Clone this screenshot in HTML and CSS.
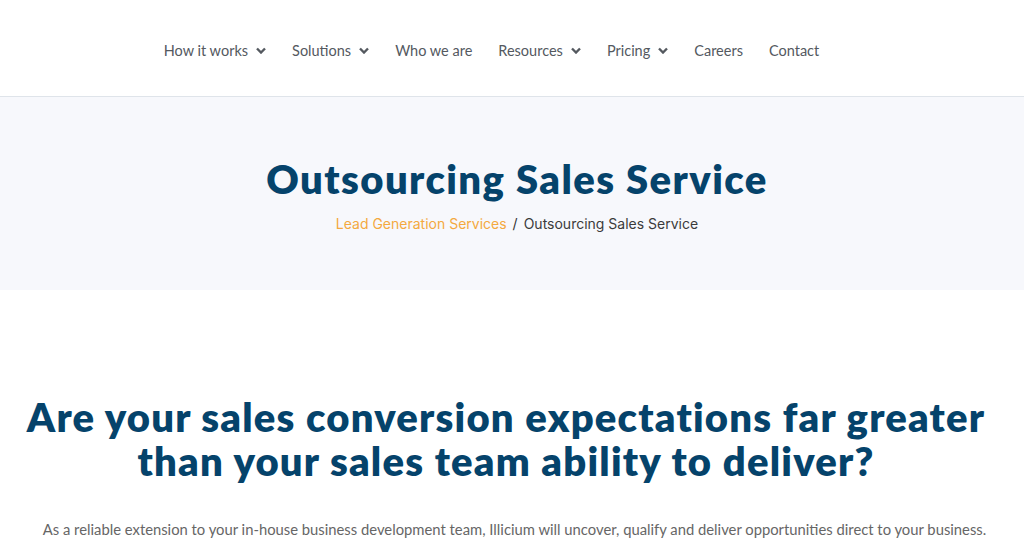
FILE: index.html
```html
<!DOCTYPE html>
<html lang="en">
<head>
<meta charset="utf-8">
<title>Outsourcing Sales Service</title>
<link rel="stylesheet" href="styles.css">
</head>
<body>
<header class="site-header">
  <nav class="main-nav">
    <a class="nav-item" href="#">How it works <svg class="caret" viewBox="0 0 10 6"><path d="M1 1l4 4 4-4"/></svg></a>
    <a class="nav-item" href="#">Solutions <svg class="caret" viewBox="0 0 10 6"><path d="M1 1l4 4 4-4"/></svg></a>
    <a class="nav-item" href="#">Who we are</a>
    <a class="nav-item" href="#">Resources <svg class="caret" viewBox="0 0 10 6"><path d="M1 1l4 4 4-4"/></svg></a>
    <a class="nav-item" href="#">Pricing <svg class="caret" viewBox="0 0 10 6"><path d="M1 1l4 4 4-4"/></svg></a>
    <a class="nav-item" href="#">Careers</a>
    <a class="nav-item" href="#">Contact</a>
  </nav>
</header>
<section class="hero">
  <h1 class="hero-title">Outsourcing Sales Service</h1>
  <div class="breadcrumb"><a href="#" class="crumb-link">Lead Generation Services</a><span class="crumb-sep">/</span><span class="crumb-current">Outsourcing Sales Service</span></div>
</section>
<main class="content">
  <h2 class="lead-heading">Are your sales conversion expectations far greater than your sales team ability to deliver?</h2>
  <p class="lead-text">As a reliable extension to your in-house business development team, Illicium will uncover, qualify and deliver opportunities direct to your business.</p>
</main>
</body>
</html>
```
FILE: styles.css
```css
* { box-sizing: border-box; }
html, body { margin: 0; padding: 0; background: #fff; }
body { font-family: "Lato", "Open Sans", sans-serif; overflow: hidden; }
a { text-decoration: none; }

.site-header {
  height: 97px;
  border-bottom: 1px solid #dfe4ea;
  display: flex;
  justify-content: center;
  align-items: center;
}
.main-nav { display: flex; gap: 26px; padding-top: 5px; margin-left: -41px; }
.nav-item {
  color: #54595f;
  font-size: 14.5px;
  display: flex;
  align-items: center;
  gap: 8px;
}
.caret { width: 10px; height: 7px; fill: none; stroke: #54595f; stroke-width: 2.4; }

.hero {
  background: #f7f8fc;
  height: 193px;
  display: flex;
  flex-direction: column;
  align-items: center;
  padding: 58px 0 0 10px;
}
.hero-title {
  margin: 0;
  color: #05436b;
  font-size: 40px;
  font-weight: 800;
  line-height: 48px;
  letter-spacing: 1.4px;
}
.breadcrumb { margin-top: 12px; font-size: 14px; font-family: "Inter", sans-serif; }
.crumb-link { color: #f4a93f; }
.crumb-sep { color: #333; margin: 0 6px; }
.crumb-current { color: #3b3b3b; }

.content { padding: 105px 10px 0; text-align: center; }
.lead-heading {
  margin: 0;
  padding-right: 12px;
  color: #05436b;
  font-size: 40px;
  font-weight: 800;
  line-height: 44px;
  letter-spacing: 1.2px;
}
.lead-text {
  margin: 37px 0 0;
  padding-left: 5px;
  color: #666;
  font-size: 14.8px;
}
```
